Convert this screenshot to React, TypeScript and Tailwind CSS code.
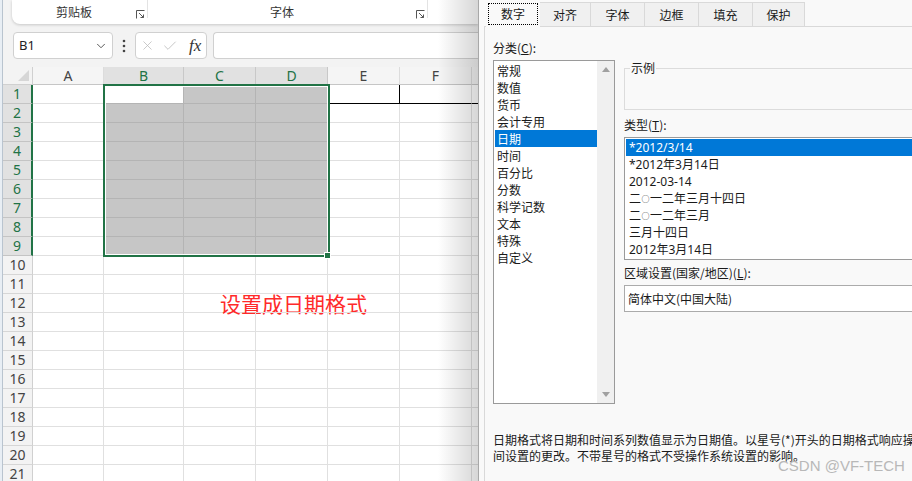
import React from 'react';
import { ChevronDown, X, Check } from 'lucide-react';

const COLS = [
  { l: 'A', w: 'w-[71px]' },
  { l: 'B', w: 'w-[80px]' },
  { l: 'C', w: 'w-[72px]' },
  { l: 'D', w: 'w-[72px]' },
  { l: 'E', w: 'w-[72px]' },
  { l: 'F', w: 'w-[72px]' },
  { l: 'G', w: 'w-[72px]' },
];

const CATEGORIES = ['常规', '数值', '货币', '会计专用', '日期', '时间', '百分比', '分数', '科学记数', '文本', '特殊', '自定义'];
const TYPES = ['*2012/3/14', '*2012年3月14日', '2012-03-14', '二○一二年三月十四日', '二○一二年三月', '三月十四日', '2012年3月14日'];
const TABS = [
  { t: '对齐', w: 'w-[51px]' },
  { t: '字体', w: 'w-[54px]' },
  { t: '边框', w: 'w-[54px]' },
  { t: '填充', w: 'w-[54px]' },
  { t: '保护', w: 'w-[52px]' },
];

function Launcher() {
  return (
    <svg width="9" height="9" viewBox="0 0 9 9" className="text-[#555] shrink-0">
      <path d="M0.5 8.5V0.5H8.5" fill="none" stroke="currentColor" strokeWidth="1" />
      <path d="M3 3L7.5 7.5M7.5 4.5V7.5H4.5" fill="none" stroke="currentColor" strokeWidth="1" />
    </svg>
  );
}

function TypeText({ t }: { t: string }) {
  const parts = t.split('○');
  if (parts.length === 1) return <>{t}</>;
  return (
    <>
      {parts[0]}
      <span className="text-[8px] align-[1px] px-[0.5px]">○</span>
      {parts[1]}
    </>
  );
}

function Ribbon() {
  return (
    <div className="h-[24px] ml-[9px] bg-white rounded-bl-[8px] shadow-[0_1px_3px_rgba(0,0,0,0.18)] flex text-[12px] text-[#333] font-['Noto_Sans_CJK_SC',sans-serif]">
      <div className="w-[136px] flex shrink-0">
        <div className="flex-1 text-center leading-[24px]">剪贴板</div>
        <div className="self-end mb-[5px] mr-[2px]"><Launcher /></div>
        <div className="w-px h-[18px] bg-[#e3e3e3]" />
      </div>
      <div className="w-[280px] flex shrink-0">
        <div className="flex-1 text-center leading-[24px]">字体</div>
        <div className="self-end mb-[5px] mr-[2px]"><Launcher /></div>
        <div className="w-px h-[18px] bg-[#e3e3e3]" />
      </div>
      <div className="flex-1" />
    </div>
  );
}

function FormulaBar() {
  return (
    <div className="h-[43px] flex items-center pl-[10px]">
      <div className="w-[100px] h-[27px] shrink-0 bg-white border border-[#d0d0d0] rounded-[4px] flex items-center justify-between pl-[5px] pr-[4px] text-[13px] text-[#222] font-['Noto_Sans',sans-serif]">
        <span>B1</span>
        <ChevronDown size={14} strokeWidth={1.5} className="text-[#444]" />
      </div>
      <div className="w-[22px] shrink-0 flex justify-center">
        <svg width="4" height="14" viewBox="0 0 4 14">
          <circle cx="2" cy="2" r="1.3" fill="#444" />
          <circle cx="2" cy="7" r="1.3" fill="#444" />
          <circle cx="2" cy="12" r="1.3" fill="#444" />
        </svg>
      </div>
      <div className="w-[72px] h-[27px] shrink-0 bg-white border border-[#d0d0d0] rounded-[4px] flex items-center pl-[4px] gap-[7px]">
        <X size={15} strokeWidth={1.2} className="text-[#b8b8b8]" />
        <Check size={16} strokeWidth={1.2} className="text-[#b8b8b8]" />
        <span className="text-[17px] italic font-['Liberation_Serif',serif] text-[#333] leading-none ml-[4px]">fx</span>
      </div>
      <div className="flex-1 h-[27px] ml-[6px] bg-white border border-r-0 border-[#d0d0d0] rounded-l-[4px]" />
    </div>
  );
}

function Grid() {
  const rows = Array.from({ length: 21 }, (_, i) => i + 1);
  return (
    <div className="relative flex-1 overflow-hidden bg-white font-['Noto_Sans',sans-serif]">
      <div className="flex h-[18px]">
        <div className="w-[30px] shrink-0 relative bg-[#f3f3f3] border-r border-b border-[#d0d0d0]">
          <div className="absolute right-[3px] bottom-[3px] w-0 h-0 border-l-[11px] border-l-transparent border-b-[11px] border-b-[#d6d6d6]" />
        </div>
        {COLS.map((c, i) => {
          const sel = i >= 1 && i <= 3;
          return (
            <div
              key={c.l}
              className={`${c.w} shrink-0 flex items-center justify-center border-r border-b text-[14px] leading-none ${
                sel ? 'bg-[#e1e1e1] text-[#217346] border-r-[#c8c8c8] border-b-[#c0c0c0]' : 'bg-[#f5f5f5] text-[#444] border-r-[#dcdcdc] border-b-[#c6c6c6]'
              }`}
            >
              {c.l}
            </div>
          );
        })}
      </div>
      {rows.map((rn) => {
        const selRow = rn <= 9;
        return (
          <div key={rn} className="flex h-[19px]">
            <div
              className={`w-[30px] shrink-0 flex items-center justify-center text-[14px] leading-none border-b ${
                selRow
                  ? 'bg-[#e1e1e1] text-[#217346] border-b-[#c4c4c4] border-r-2 border-r-[#217346]'
                  : 'bg-[#f3f3f3] text-[#444] border-b-[#d6d6d6] border-r border-r-[#d0d0d0]'
              }`}
            >
              {rn}
            </div>
            {COLS.map((c, ci) => {
              const inSel = selRow && ci >= 1 && ci <= 3;
              const active = rn === 1 && ci === 1;
              let cls = 'border-r border-b border-[#e0e0e0]';
              if (inSel && !active) cls = 'bg-[#c6c6c6] border-r border-b border-[#b4b4b4]';
              if (active) cls = 'bg-white border-r border-b border-[#b4b4b4]';
              if (rn === 1 && ci === 4) cls = 'border-r border-b border-black';
              if (rn === 1 && ci > 4) cls = 'border-r border-b border-r-[#e0e0e0] border-b-black';
              if (rn === 12 && (ci === 2 || ci === 3)) cls = 'border-r border-b border-r-transparent border-b-[#e0e0e0]';
              return (
                <div key={c.l} className={`${c.w} shrink-0 ${cls} ${rn === 12 && ci === 2 ? 'flex items-center overflow-visible' : ''}`}>
                  {rn === 12 && ci === 2 && (
                    <span className="pl-[36px] whitespace-nowrap text-[21px] leading-none text-[#ff2a2a] font-['Noto_Sans_CJK_SC',sans-serif]">
                      设置成日期格式
                    </span>
                  )}
                </div>
              );
            })}
          </div>
        );
      })}
      <div className="absolute left-[100px] top-[17px] w-[227px] h-[173px] border-2 border-[#217346] shadow-[inset_0_0_0_1px_white] pointer-events-none" />
      <div className="absolute left-[321px] top-[185px] w-[7px] h-[7px] bg-[#217346] border border-white" />
    </div>
  );
}

function Excel() {
  return (
    <div className="relative w-[478px] shrink-0 h-full flex bg-[#f3f3f3] overflow-hidden">
      <div className="w-[3px] shrink-0 h-full bg-[#e8eef4] border-r border-[#b9c4cf]" />
      <div className="flex-1 flex flex-col min-w-0">
        <Ribbon />
        <FormulaBar />
        <Grid />
      </div>
      <div className="absolute right-0 top-0 bottom-0 w-[40px] bg-linear-to-r from-transparent to-[rgba(0,0,0,0.16)] pointer-events-none" />
    </div>
  );
}

function Dialog() {
  return (
    <div className="relative flex-1 h-full bg-[#f9f9f9] border-l border-[#a8a8a8] overflow-hidden text-[12px] text-[#1a1a1a] font-['Noto_Sans_CJK_SC',sans-serif]">
      <div className="flex h-[26px] pl-[7px] pt-[2px] relative z-10">
        <div className="w-[54px] h-[25px] bg-[#f9f9f9] px-[2px] pt-[1px]">
          <div className="h-[22px] border border-dotted border-black flex items-center justify-center leading-none">数字</div>
        </div>
        {TABS.map((t) => (
          <div key={t.t} className={`${t.w} h-[24px] bg-[#f0f0f0] border-t border-r border-[#d9d9d9] flex items-center justify-center leading-none`}>
            {t.t}
          </div>
        ))}
      </div>
      <div className="ml-[5px] h-[455px] border-l border-t border-[#d9d9d9] pl-[8px] pt-[13px]">
        <div className="flex">
          <div className="w-[122px] shrink-0">
            <div className="h-[16px] leading-[16px]">分类(<span className="underline">C</span>):</div>
            <div className="mt-[4px] h-[344px] bg-white border border-[#9a9a9a] flex">
              <div className="flex-1 pt-[1px] pl-[1px]">
                {CATEGORIES.map((c) => (
                  <div key={c} className={`h-[17px] leading-[17px] pl-[2px] ${c === '日期' ? 'bg-[#0078d7] text-white' : ''}`}>
                    {c}
                  </div>
                ))}
              </div>
              <div className="w-[17px] bg-[#f0f0f0] flex flex-col items-center justify-between py-[6px]">
                <div className="w-0 h-0 border-l-[4px] border-r-[4px] border-b-[5px] border-l-transparent border-r-transparent border-b-[#a0a0a0]" />
                <div className="w-0 h-0 border-l-[4px] border-r-[4px] border-t-[5px] border-l-transparent border-r-transparent border-t-[#a0a0a0]" />
              </div>
            </div>
          </div>
          <div className="ml-[9px] w-[300px] shrink-0 pt-[20px]">
            <fieldset className="border border-[#dcdcdc] h-[50px] px-[5px]">
              <legend className="px-[1px] leading-[16px]">示例</legend>
            </fieldset>
            <div className="mt-[7px] h-[16px] leading-[16px]">类型(<span className="underline">T</span>):</div>
            <div className="mt-[4px] h-[123px] bg-white border border-[#9a9a9a] pt-[1px] pl-[1px]">
              {TYPES.map((t, i) => (
                <div key={t} className={`h-[17px] leading-[17px] pl-[3px] font-['Noto_Sans','Noto_Sans_CJK_SC',sans-serif] ${i === 0 ? 'bg-[#0078d7] text-white' : ''}`}>
                  <TypeText t={t} />
                </div>
              ))}
            </div>
            <div className="mt-[5px] h-[16px] leading-[16px]">区域设置(国家/地区)(<span className="underline">L</span>):</div>
            <div className="mt-[4px] h-[27px] bg-white border border-[#ababab] flex items-center pl-[3px]">简体中文(中国大陆)</div>
          </div>
        </div>
        <div className="mt-[28px] leading-[16px] whitespace-nowrap">
          <div>日期格式将日期和时间系列数值显示为日期值。以星号(*)开头的日期格式响应操作系统特定的区域日期和时</div>
          <div>间设置的更改。不带星号的格式不受操作系统设置的影响。</div>
        </div>
      </div>
      <div className="absolute left-[299px] top-[456px] text-[15px] leading-[20px] text-[#b8b8b8] font-['Liberation_Sans',sans-serif] pointer-events-none whitespace-nowrap">
        CSDN @VF-TECH
      </div>
    </div>
  );
}

export default function App() {
  return (
    <div className="w-[912px] h-[481px] flex overflow-hidden bg-white">
      <Excel />
      <Dialog />
    </div>
  );
}
